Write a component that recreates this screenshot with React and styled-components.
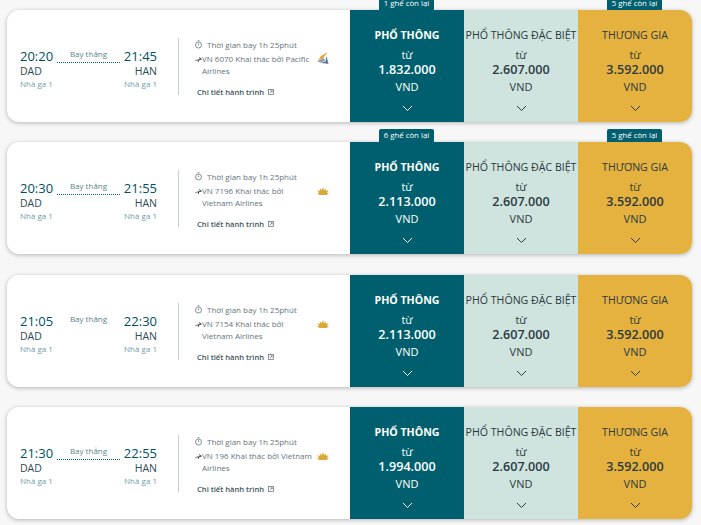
import React from 'react';
import styled, { createGlobalStyle } from 'styled-components';

const Global = createGlobalStyle`
  html, body { margin: 0; padding: 0; background: #f7f7f7; }
  body { width: 701px; height: 525px; overflow: hidden; font-family: "Open Sans", "Noto Sans", sans-serif; }
`;
const List = styled.div`
  display: flex; flex-direction: column; gap: 20px; padding: 10px 9px 0 7px;
`;
const Card = styled.div`
  position: relative; height: 112px; display: flex; background: #fff; border-radius: 12px;
  box-shadow: 0 1px 4px rgba(0,0,0,.28);
  &:nth-child(2) { margin-bottom: 1px; }
`;
const Route = styled.div`
  width: 171px; padding: 36.5px 21px 0 13px; box-sizing: border-box; display: flex; flex-direction: column;
`;
const Row = styled.div`
  display: flex; justify-content: space-between; align-items: flex-end;
`;
const Time = styled.span`
  font-size: 13px; line-height: 15px; color: #00505f;
`;
const Mid = styled.div`
  width: 63px; height: 16px; padding-top: 1px; box-sizing: border-box; margin-bottom: 1px; text-align: center; font-size: 8px; line-height: 11px; color: #5d7f89;
  border-bottom: ${p => (p.$plain ? 'none' : '1px dotted #00677b')};
`;
const Code = styled.span`
  font-size: 10.5px; line-height: 14px; color: #2e4a55;
`;
const Term = styled.span`
  font-size: 8px; line-height: 12px; color: #6f9aa8; margin-top: .5px;
`;
const Divider = styled.div`
  width: 1px; height: 57px; background: #c4d0d6; align-self: center;
`;
const Info = styled.div`
  flex: 1; padding: 28.5px 0 0 16px; display: flex; flex-direction: column;
  font-size: 8px; color: #66747b;
`;
const Duration = styled.div`
  display: flex; align-items: center; gap: 5px; line-height: 11px; margin-bottom: 3.5px;
`;
const FlightLine = styled.div`
  display: flex; align-items: flex-start; line-height: 12px;
`;
const FlightText = styled.div`
  width: 112px;
`;
const Logo = styled.div`
  margin-left: 3px; margin-top: ${p => p.$top}px; flex: none;
`;
const Details = styled.div`
  display: flex; align-items: center; gap: 4px; margin-top: 9.5px; margin-left: 2px; font-size: 7.6px; line-height: 11px; font-weight: 600; color: #3d5560;
`;
const Fare = styled.div`
  position: relative; width: 114px; display: flex; flex-direction: column; align-items: center; padding-top: 17px; box-sizing: border-box;
  background: ${p => p.$bg}; color: ${p => p.$fg};
  border-radius: ${p => (p.$last ? '0 12px 12px 0' : '0')};
  white-space: nowrap;
`;
const Title = styled.div`
  font-size: 10.6px; line-height: 16px; font-weight: ${p => (p.$bold ? 700 : 500)};
`;
const From = styled.div`
  font-size: 11px; line-height: 15px; margin-top: 3.5px;
`;
const Price = styled.div`
  font-size: 12.6px; line-height: 16px; font-weight: 600; margin-top: .5px;
`;
const Cur = styled.div`
  font-size: 11px; line-height: 15px; margin-top: .5px;
`;
const Chev = styled.svg`
  margin-top: 11px; width: 11px; height: 7px; fill: none; stroke: currentColor; stroke-width: 1;
`;
const Badge = styled.div`
  position: absolute; top: -13px; left: 29px; width: 55px; height: 13px; background: #005f6e; color: #fff;
  font-size: 7.8px; line-height: 13px; text-align: center;
  border-radius: 2px 2px 0 0;
`;

const Timer = () => (
  <svg width="7" height="9" viewBox="0 0 7 9" fill="none" stroke="#66747b" strokeWidth=".8">
    <circle cx="3.5" cy="5" r="3" /><path d="M3.5 3.5V5.2M2.5.8h2" />
  </svg>
);
const Plane = () => (
  <svg width="7" height="7" viewBox="0 0 7 7" style={{ marginTop: 3, flex: 'none' }} fill="#33444c">
    <path d="M0 4.2 L5 3 L3.8 1.2 L4.6 1.2 L6.6 3 C7 3.4 6.6 3.8 6 3.8 L4.4 4 L3.4 6 L2.8 6 L3 4.3 L.6 4.8Z" />
  </svg>
);
const Ext = () => (
  <svg width="6" height="6" viewBox="0 0 6 6" fill="none" stroke="#5d6b72" strokeWidth=".7">
    <rect x=".5" y=".5" width="5" height="5" /><path d="M1.8 4.2 4.2 1.8M2.6 1.8h1.6v1.6" />
  </svg>
);
const Pacific = () => (
  <svg width="12" height="13" viewBox="0 0 12 13">
    <path d="M10.5 0 L4 4 L1 8.5 L6 6.5 Z" fill="#e9a43a" />
    <path d="M0 9.5 L7 6 L8 9 L3.5 10.5Z" fill="#8a9db0" />
    <path d="M3.5 11 L8.5 9.5 L9.5 4 L11.5 12 L9 11.5Z" fill="#5a7596" />
  </svg>
);
const Lotus = () => (
  <svg width="12" height="9" viewBox="0 0 12 9" fill="#d9a93a">
    <path d="M6 0 L7.2 3.2 L9 1.5 L9 4 L11.6 3 L10 6 L12 6.3 L9.5 8 H2.5 L0 6.3 L2 6 L.4 3 L3 4 L3 1.5 L4.8 3.2Z" />
  </svg>
);

const FARES = [
  ['PHỔ THÔNG', '#005f6e', '#fff'],
  ['PHỔ THÔNG ĐẶC BIỆT', '#cfe3df', '#2b3a40'],
  ['THƯƠNG GIA', '#e6b23f', '#2b3a40'],
];
const DATA = [
  { dep: '20:20', arr: '21:45', no: 'VN 6070 Khai thác bởi Pacific Airlines', logo: 'p', price: '1.832.000', seats: ['1 ghế còn lại', null, '5 ghế còn lại'] },
  { dep: '20:30', arr: '21:55', no: 'VN 7196 Khai thác bởi Vietnam Airlines', logo: 'v', price: '2.113.000', seats: ['6 ghế còn lại', null, '5 ghế còn lại'] },
  { dep: '21:05', arr: '22:30', no: 'VN 7154 Khai thác bởi Vietnam Airlines', logo: 'v', plain: true, price: '2.113.000', seats: [null, null, null] },
  { dep: '21:30', arr: '22:55', no: 'VN 196 Khai thác bởi Vietnam Airlines', logo: 'v', price: '1.994.000', seats: [null, null, null] },
];

export default function App() {
  return (
    <>
      <Global />
      <List>
        {DATA.map(f => (
          <Card key={f.dep}>
            <Route>
              <Row>
                <Time>{f.dep}</Time>
                <Mid $plain={f.plain}>Bay thẳng</Mid>
                <Time>{f.arr}</Time>
              </Row>
              <Row><Code>DAD</Code><Code>HAN</Code></Row>
              <Row><Term>Nhà ga 1</Term><Term>Nhà ga 1</Term></Row>
            </Route>
            <Divider />
            <Info>
              <Duration><Timer />Thời gian bay 1h 25phút</Duration>
              <FlightLine>
                <Plane />
                <FlightText>{f.no}</FlightText>
                <Logo $top={f.logo === 'p' ? -1 : 2}>{f.logo === 'p' ? <Pacific /> : <Lotus />}</Logo>
              </FlightLine>
              <Details>Chi tiết hành trình <Ext /></Details>
            </Info>
            {FARES.map(([t, bg, fg], i) => (
              <Fare key={t} $bg={bg} $fg={fg} $last={i === 2}>
                {f.seats[i] && <Badge>{f.seats[i]}</Badge>}
                <Title $bold={i === 0}>{t}</Title>
                <From>từ</From>
                <Price>{i === 0 ? f.price : i === 1 ? '2.607.000' : '3.592.000'}</Price>
                <Cur>VND</Cur>
                <Chev viewBox="0 0 11 7"><path d="M1 1l4.5 4.5L10 1" /></Chev>
              </Fare>
            ))}
          </Card>
        ))}
      </List>
    </>
  );
}
